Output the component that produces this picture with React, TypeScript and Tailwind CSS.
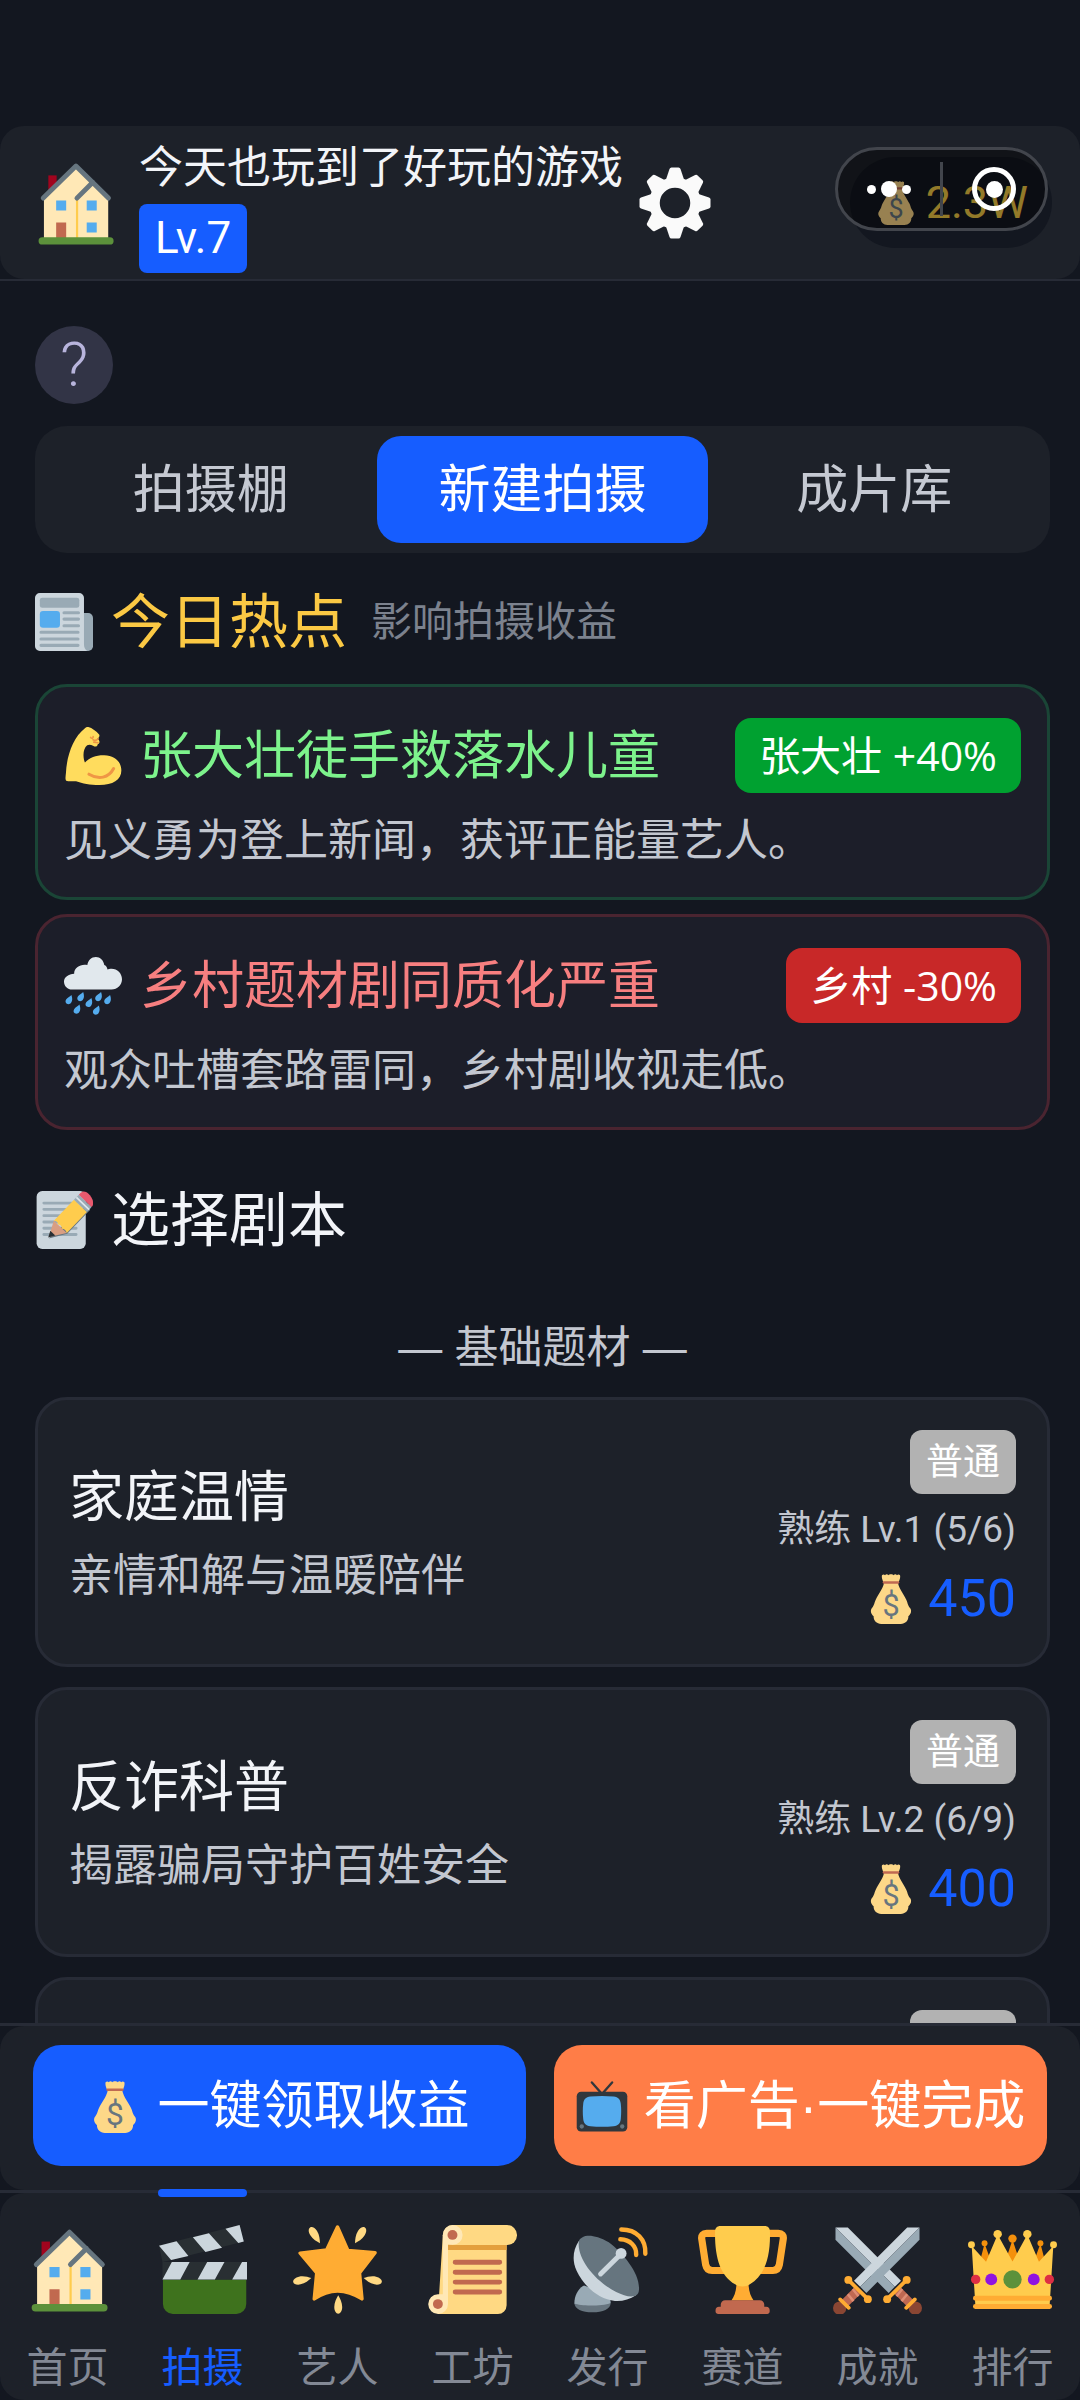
import { useState } from "react";
import type { ReactNode } from "react";

type IconProps = { className?: string };

function Emoji({ className, children }: IconProps & { children: ReactNode }) {
  return (
    <svg viewBox="0 0 36 36" aria-hidden="true" className={`block shrink-0 ${className ?? ""}`}>
      {children}
    </svg>
  );
}

function House({ className }: IconProps) {
  return (
    <Emoji className={className}>
      <path fill="#A0041E" d="M7.500 6.700h3.400v7H7.500z" />
      <path fill="#FFE8B6" d="M18.800 3L5.700 16v16.500h26.300V16z" />
      <path fill="#FFCC4D" d="M18.800 16h.9v16.500h-.9z" />
      <path d="M5.400 16L18.800 2.900 32.100 16M19.200 16l6.500-6.500" fill="none" stroke="#66757F" strokeWidth="2" strokeLinecap="round" strokeLinejoin="round" />
      <path fill="#55ACEE" d="M10.700 17h4.100v4.100h-4.100zM23.200 17h4.100v4.100h-4.100zM23.200 26h4.100v4.100h-4.100z" />
      <path fill="#C1694F" d="M10.700 26h4.100v6.500h-4.100z" />
      <rect x="3.500" y="32" width="30.700" height="3" rx="1.500" fill="#5C913B" />
    </Emoji>
  );
}

function MoneyBag({ className }: IconProps) {
  return (
    <Emoji className={className}>
      <path fill="#FDD888" d="M13 6.500h10c1.200 5 4.200 8 6 12 1.200 2.400.8 3.600 2.700 6 1.600 2 .5 4.500-1.200 6 .2 3-2.200 5.500-5.500 5.500H11c-3.300 0-5.700-2.500-5.500-5.500-1.700-1.500-2.800-4-1.200-6 1.900-2.400 1.500-3.600 2.700-6 1.800-4 4.800-7 6-12z" />
      <path fill="#FDD888" d="M11.500.9c.7-.8 1.700-.7 2.200 0 .6-.9 1.800-.9 2.400 0 .7-1 3.100-1 3.800 0 .6-.9 1.800-.9 2.400 0 .5-.7 1.500-.8 2.200 0 .4 1.600-.3 3.300-1 5.100h-11c-.7-1.800-1.400-3.500-1-5.100z" />
      <rect x="12" y="5.200" width="12" height="1.800" rx=".9" fill="#BF6952" />
      <text x="18" y="30.500" textAnchor="middle" fontSize="22" fontFamily="Roboto, sans-serif" fill="#67757F">$</text>
    </Emoji>
  );
}

function Newspaper({ className }: IconProps) {
  return (
    <Emoji className={className}>
      <rect x="22" y="12.400" width="14" height="23.600" rx="3" fill="#99AAB5" />
      <path fill="#CCD6DD" d="M3 0h24.400a3 3 0 013 3v29c0 1.800.7 3.200 2 4H3a3 3 0 01-3-3V3a3 3 0 013-3z" />
      <rect x="3" y="3" width="24.500" height="6.200" rx="1.500" fill="#99AAB5" />
      <rect x="3" y="11.200" width="12.500" height="10.300" rx="2" fill="#55ACEE" />
      <path d="M18 12.200h9M18 16.200h9M18 20.300h9M3.700 24.400h23M3.700 28.500h23M3.700 32.500h23" stroke="#99AAB5" strokeWidth="1.900" strokeLinecap="round" />
    </Emoji>
  );
}

function FlexedArm({ className }: IconProps) {
  return (
    <Emoji className={className}>
      <path fill="#FFDC5D" d="M15.100 0c2.300.6 5 2.600 6.700 4.700.6.900-.2 1.900-1.200 2.600 1 .5 1.600 1.300 1.400 2.300-.2.900-1.300 1-1.300 1.800 0 1-1.500.9-2.700.2-1.200-.6-2.600-1-3.600-.2-1.600 1.300-2.300 3.600-2.300 6 0 1.800.4 3.500.9 4.700 3.100-3.300 7-4.600 12-4.500 6.500.2 10.600 4 10.600 9.400 0 5.800-5.400 9-13.600 9-6 0-10.500-1-14.500-2.400-1.700 0-5.300.2-6.100-.3C.600 32.600 1 30.500 1.200 28.500 1.700 18 5.500 6.500 13 .700c.8-.6 1.400-.8 2.100-.7z" />
      <path d="M15.500 29.300c6 3.600 12.200 2.400 15.300-3.500" fill="none" stroke="#EF9645" strokeWidth="1.900" strokeLinecap="round" />
      <path d="M16.500 6.400c.7 1.100 1.800.5 1.600-.5M18 7.900c1.300.8 2.300.4 3.200-.6M18.500 9.400l2.600.4" fill="none" stroke="#EF9645" strokeWidth="1" strokeLinecap="round" />
    </Emoji>
  );
}

const DROPS = [[3, 26.500], [10.300, 24.600], [15.400, 28.300], [21.400, 24.600], [27, 26.500], [8, 32.400], [20, 33]];

function RainCloud({ className }: IconProps) {
  return (
    <Emoji className={className}>
      <path fill="#E1E8ED" d="M29.500 7.300c-.8-.1-1.700 0-2.500.4C26.700 6 26 5.200 25 4.900 24.500 2 22.400 0 19.800 0c-2.800 0-5 2.200-5.300 5-3.900-.9-8.300 1.400-8.200 5.400C2.800 10.600 0 12.500 0 15.300 0 18 2.300 20.200 5 20.200h24.500c3.600 0 6.500-2.800 6.500-6.400s-2.900-6.500-6.500-6.500z" />
      {DROPS.map(([x, y]) => (
        <path key={`${x}-${y}`} transform={`translate(${x} ${y})`} fill="#55ACEE" d="M1.600-2.900C2.300-1 2.300.5 1.500 1.800.9 2.800-.4 3.100-1.300 2.500-2.200 1.900-2.300.8-1.600-.2-.9-1.300.500-1.800 1.600-2.900z" />
      ))}
    </Emoji>
  );
}

function Memo({ className }: IconProps) {
  return (
    <Emoji className={className}>
      <rect x="1" y="0" width="30.500" height="36" rx="3.500" fill="#CCD6DD" />
      <path d="M5.500 7.500h20M5.500 11.400h20M5.500 15.300h20M5.500 19.200h20M5.500 23.100h20M5.500 27h20" stroke="#99AAB5" strokeWidth="1.800" strokeLinecap="round" />
      <path fill="#66757F" d="M35.800 5.500L34 12 20 26.500 8.500 29.500z" />
      <path fill="#D99E82" d="M8.500 28.500l3.200-10 8 7.600z" />
      <path fill="#292F33" d="M8.200 28.900l1.300-4.200 3.100 2.900z" />
      <path fill="#FFCC4D" d="M11.700 18.500l12.500-13 8 7.600L19.700 26.100c-.4-1.800-1.300-2.600-3-2.700 0-1.600-.8-2.500-2.400-2.600-.1-1.500-1-2.300-2.600-2.300z" />
      <path fill="#99AAB5" d="M24.200 5.500l3-3.100 7.900 7.600-2.900 3.100z" />
      <path d="M25.700 4l7.900 7.600" stroke="#E1E8ED" strokeWidth="1" />
      <path fill="#EA596E" d="M27.200 2.400l1-1.100c1.300-1.400 3.200-1.300 5 .4s3.700 4.800 2.500 7.600l-.6.700z" />
    </Emoji>
  );
}

function Clapper({ className }: IconProps) {
  return (
    <Emoji className={className}>
      <path fill="#3E721D" d="M2 22h33.700v10a4 4 0 01-4 4H6a4 4 0 01-4-4z" />
      <path fill="#292F33" d="M1.800 15H36v7H1.800zM.4 8.300L33 0l1.700 6.700-30.500 7.800L1.800 15z" />
      <path fill="#CCD6DD" d="M5.600 15h7.200L9 22H1.800zM19.900 15h7L23 22h-7zM34 15h2v7h-6zM.4 8.400l7.100-1.800 4.800 5.900-7 1.700zM14.100 5l6.500-1.700 5.300 5.900-6.700 1.700zM27.300 1.500L33 0l1.700 6.700-2.200.6z" />
    </Emoji>
  );
}

function GlowingStar({ className }: IconProps) {
  const ray = "M0-3.600c.7 1.200 1.600 2.900 1.600 4.800 0 1.600-.7 2.700-1.600 2.700S-1.600 2.800-1.600 1.200c0-1.900.9-3.600 1.600-4.800z";
  return (
    <Emoji className={className}>
      <path fill="#FFAC33" stroke="#FFAC33" strokeWidth="1.400" strokeLinejoin="round" d="M18 .8l4.200 9.500 11 .9-6.300 8.200 1 10.500c-6.500-4.200-13.300-4.200-19.300 0l1-10.500-6.700-8 10.700-1.300z" />
      <g fill="#FFD983">
        <path d={ray} transform="translate(9 4.300) rotate(148)" />
        <path d={ray} transform="translate(27 4.300) rotate(-148)" />
        <path d={ray} transform="translate(3.900 22.200) rotate(78)" />
        <path d={ray} transform="translate(32.100 22.200) rotate(-78)" />
        <path d={ray} transform="translate(18.300 32)" />
      </g>
    </Emoji>
  );
}

function Scroll({ className }: IconProps) {
  return (
    <Emoji className={className}>
      <path fill="#FFD983" d="M6 4h25.800v28.500a3.500 3.500 0 01-3.500 3.500H4z" />
      <path fill="#E39F3D" d="M8 7h23.800v3.100H8z" />
      <rect x="6" y="0" width="30" height="8.100" rx="4" fill="#FFD983" />
      <path fill="#FFE8B6" d="M10 0a4 4 0 110 8H8.100v24A4 4 0 114 28h2V4a4 4 0 014-4z" />
      <circle cx="9.900" cy="4" r="2" fill="#C1694F" />
      <circle cx="4" cy="32" r="2" fill="#C1694F" />
      <path d="M11 15.100h18M11 19.100h18M11 23.100h18M11 27.100h18" stroke="#C1694F" strokeWidth="2" strokeLinecap="round" />
    </Emoji>
  );
}

function Satellite({ className }: IconProps) {
  return (
    <Emoji className={className}>
      <path fill="#67757F" d="M4.600 31.500h14.700c0 2.400-3.200 3.800-7.400 3.800s-7.300-1.400-7.300-3.800z" />
      <path fill="#99AAB5" d="M8.500 24.500c-2.500 1.200-4 4.500-3.900 7.300 2.800 1.100 11 1.100 14.700-.3l-.4-3.500z" />
      <path fill="#CCD6DD" d="M6.400 6.500C4 10 3.600 14.500 5.500 18.500c3 6.300 9 11.600 15.500 12.200 3 .2 6-.6 8.500-2.300z" />
      <path fill="#66757F" d="M6.400 6.500C7.700 3.700 12.300 3.400 18.500 7c6 4.500 13 13 12.200 19.500-.3 3.300-4.700 2.900-9.200.6C13.500 23 5.500 14 6.400 6.500z" />
      <path d="M15.200 19.800l8.300-8.200" stroke="#CCD6DD" strokeWidth="2" strokeLinecap="round" />
      <circle cx="23.500" cy="11.500" r="2.200" fill="#CCD6DD" />
      <path d="M23.200 5.800c4 .2 6.600 2.700 6.400 6.300M23.600 1.800c6.200 0 10 4 9.700 9.800" fill="none" stroke="#FFAC33" strokeWidth="1.800" strokeLinecap="round" />
    </Emoji>
  );
}

function Trophy({ className }: IconProps) {
  return (
    <Emoji className={className}>
      <path d="M9 3.400H3.500C2 3.400 1.300 4.200 1.500 5.600l1.600 10.500c.3 1.500 1.100 2.300 2.600 2.300H12M27 3.400h5.500c1.500 0 2.200.8 2 2.200l-1.600 10.500c-.3 1.500-1.100 2.300-2.600 2.300H24" fill="none" stroke="#FFAC33" strokeWidth="2.900" />
      <path fill="#FFAC33" d="M15.500 22h5c-.3 4 .6 6.500 2 8.500h-9c1.400-2 2.300-4.500 2-8.500z" />
      <path fill="#C1694F" d="M11 30.400h14a1.800 1.800 0 011.800 1.800v.9h.8c.9 0 1.400.6 1.400 1.400v.5c0 .6-.5 1-1 1H8.200c-.6 0-1.100-.4-1.100-1v-.5c0-.8.5-1.400 1.400-1.400h.7v-.9a1.800 1.800 0 011.800-1.800z" />
      <path fill="#FFCC4D" d="M9 .4h18c1.300 0 2.100.9 2.100 2.200C29.400 13 27 20.500 21 24c-1.800 1.200-4.200 1.200-6 0C9 20.500 6.700 13 6.900 2.600 6.900 1.300 7.700.4 9 .4z" />
    </Emoji>
  );
}

function Sword() {
  return (
    <>
      <path fill="#CCD6DD" d="M35 1h-5L8.500 22.500 11 25z" />
      <path fill="#99AAB5" d="M35 1v5L13.500 27.500 11 25z" />
      <path d="M10.600 25.800L4 32.400" stroke="#BF6952" strokeWidth="3.600" />
      <path d="M8 25.900l2.300 2.900M6 28l2.300 2.800" stroke="#DE8E75" strokeWidth="1" />
      <circle cx="2.700" cy="33.600" r="2.700" fill="#8A4633" />
      <path d="M2.900 30.100l3.500 3.400M6.300 22.300l7.800 7.700" stroke="#FFAC33" strokeWidth="1.500" strokeLinecap="round" />
      <circle cx="6.200" cy="22.200" r="1.600" fill="#FFAC33" />
      <circle cx="14.100" cy="30" r="1.600" fill="#FFAC33" />
    </>
  );
}

function CrossedSwords({ className }: IconProps) {
  return (
    <Emoji className={className}>
      <g transform="matrix(-1 0 0 1 36 0)">
        <Sword />
      </g>
      <Sword />
    </Emoji>
  );
}

function Crown({ className }: IconProps) {
  return (
    <Emoji className={className}>
      <g fill="#F4900C">
        <path d="M6.700 7.500L4 18h6.500zM18 6l-4 12h8zM29.300 7.500L25.500 18H32z" />
        <circle cx="6.700" cy="7.400" r="1.200" />
        <circle cx="18" cy="5.500" r="1.700" />
        <circle cx="29.300" cy="7.400" r="1.200" />
      </g>
      <path fill="#FFCC4D" d="M1.500 8.500l5.800 6.400L12 3.800l6 11 6-11 4.700 11.100 5.800-6.400L33 33H3z" />
      <g fill="#FFCC4D">
        <circle cx="1.400" cy="8" r="1.400" />
        <circle cx="12" cy="3.700" r="1.700" />
        <circle cx="24" cy="3.700" r="1.700" />
        <circle cx="34.600" cy="8" r="1.400" />
      </g>
      <path d="M3 29.600h30M3 33h30" stroke="#FFAC33" strokeWidth="2" strokeLinecap="round" />
      <circle cx="18" cy="22" r="3.700" fill="#5C913B" />
      <circle cx="9.400" cy="22" r="2.400" fill="#9013E0" />
      <circle cx="26.600" cy="22" r="2.400" fill="#9013E0" />
      <circle cx="3.100" cy="22" r="1.900" fill="#DD2E44" />
      <circle cx="32.900" cy="22" r="1.900" fill="#DD2E44" />
    </Emoji>
  );
}

function Television({ className }: IconProps) {
  return (
    <Emoji className={className}>
      <path d="M11 1l7 8 7-8" fill="none" stroke="#31373D" strokeWidth="1.600" strokeLinecap="round" />
      <rect x=".5" y="7.500" width="35" height="27.500" rx="3" fill="#31373D" />
      <path fill="#55ACEE" d="M10 10.800c5.300-.5 10.700-.5 16 0 3.400.4 4.700 2.200 5 5 .4 3.700.4 6.800 0 10.500-.3 2.800-1.600 4.600-5 5-5.300.5-10.700.5-16 0-3.400-.4-4.700-2.200-5-5-.4-3.700-.4-6.800 0-10.500.3-2.800 1.600-4.600 5-5z" />
      <circle cx="4" cy="31.500" r="1.500" fill="#66757F" />
      <circle cx="32" cy="31.500" r="1.500" fill="#66757F" />
    </Emoji>
  );
}

const TEETH = [0, 45, 90, 135, 180, 225, 270, 315];

function Gear({ className }: IconProps) {
  return (
    <svg viewBox="-36 -36 72 72" aria-hidden="true" className={className}>
      <circle r="20.500" fill="none" stroke="currentColor" strokeWidth="10.500" />
      {TEETH.map(a => (
        <path key={a} transform={`rotate(${a})`} fill="currentColor" d="M-9.500-22l4-12q.5-1.500 2-1.500h7q1.500 0 2 1.500L9.500-22z" />
      ))}
    </svg>
  );
}

const TABS = ["拍摄棚", "新建拍摄", "成片库"];

const NEWS = [
  { icon: FlexedArm, title: "张大壮徒手救落水儿童", desc: "见义勇为登上新闻，获评正能量艺人。", badge: "张大壮 +40%", border: "border-[#1a4536]", color: "text-[#7df38c]", badgeBg: "bg-[#00a130]" },
  { icon: RainCloud, title: "乡村题材剧同质化严重", desc: "观众吐槽套路雷同，乡村剧收视走低。", badge: "乡村 -30%", border: "border-[#4a2430]", color: "text-[#f77f80]", badgeBg: "bg-[#c82828]" },
];

const SCRIPTS = [
  { title: "家庭温情", desc: "亲情和解与温暖陪伴", rarity: "普通", skill: "熟练 Lv.1 (5/6)", price: 450 },
  { title: "反诈科普", desc: "揭露骗局守护百姓安全", rarity: "普通", skill: "熟练 Lv.2 (6/9)", price: 400 },
];

const NAV = [
  { label: "首页", icon: House },
  { label: "拍摄", icon: Clapper },
  { label: "艺人", icon: GlowingStar },
  { label: "工坊", icon: Scroll },
  { label: "发行", icon: Satellite },
  { label: "赛道", icon: Trophy },
  { label: "成就", icon: CrossedSwords },
  { label: "排行", icon: Crown },
];

export default function App() {
  const [tab, setTab] = useState("新建拍摄");
  const [page, setPage] = useState("拍摄");

  return (
    <div lang="zh-CN" className="flex h-screen flex-col overflow-hidden bg-[#131720] pt-[126px] font-[Roboto,'Noto_Sans_CJK_SC',sans-serif] text-[#f2f4f8]">
      {/* Header */}
      <header className="relative shrink-0 border-b-2 border-[#272b36]">
        <div className="flex h-[153px] items-center rounded-3xl bg-[#1d2129] pr-7 pl-[30px]">
          <House className="size-[88px]" />
          <div className="ml-[21px] flex flex-col items-start gap-1 pt-1">
            <span className="text-[44px] leading-[64px] whitespace-nowrap">今天也玩到了好玩的游戏</span>
            <span className="rounded-lg bg-[#165dff] px-4 text-[44px] leading-[69px] text-white">Lv.7</span>
          </div>
          <button aria-label="设置" className="ml-4 text-[#fafafa]">
            <Gear className="size-[72px]" />
          </button>
          <div className="ml-auto flex h-[91px] items-center gap-2 rounded-full bg-[#131720] px-6">
            <MoneyBag className="size-11" />
            <span className="text-[45px] leading-[60px] text-[#f5cb45]">2.3W</span>
          </div>
        </div>
        {/* Mini-program capsule floats over the balance */}
        <div className="absolute top-[21px] right-8 flex h-[84px] w-[213px] items-center rounded-full border-[3px] border-[#42454c] bg-black/40">
          <button aria-label="更多" className="flex h-full flex-1 items-center justify-center gap-[5px]">
            <span className="size-[9px] rounded-full bg-white" />
            <span className="size-4 rounded-full bg-white" />
            <span className="size-[9px] rounded-full bg-white" />
          </button>
          <span className="h-[54px] w-[3px] bg-[#42454c]" />
          <button aria-label="关闭" className="flex h-full flex-1 items-center justify-center">
            <span className="flex size-11 items-center justify-center rounded-full border-[5px] border-white">
              <span className="size-[17px] rounded-full bg-white" />
            </span>
          </button>
        </div>
      </header>

      <main className="min-h-0 flex-1 overflow-hidden pt-[45px] pr-[30px] pl-[35px]">
        <button className="flex size-[78px] items-center justify-center rounded-full bg-[#323446] text-[62px] leading-[60px] font-light text-[#b8b4dc]">?</button>

        {/* Tabs */}
        <div className="mt-[22px] flex rounded-[32px] bg-[#1d2129] p-[10px]">
          {TABS.map(t => (
            <button key={t} onClick={() => setTab(t)}
              className={`flex-1 rounded-3xl pt-[2px] text-[52px] leading-[105px] ${tab === t ? "bg-[#165dff] text-white" : "text-[#c5c9d2]"}`}>
              {t}
            </button>
          ))}
        </div>

        {/* Today's news */}
        <div className="mt-[29px] flex items-center">
          <Newspaper className="size-[58px]" />
          <h2 className="ml-[18px] pt-[2px] text-[59px] leading-[78px] text-[#fbc944]">今日热点</h2>
          <span className="ml-6 text-[41px] leading-[60px] text-[#7c828e]">影响拍摄收益</span>
        </div>
        <div className="mt-[22px] flex flex-col gap-[14px]">
          {NEWS.map(n => (
            <article key={n.title} className={`rounded-[32px] border-[3px] bg-[#1c1e29] px-[26px] pt-[31px] pb-[26px] ${n.border}`}>
              <div className="flex items-center">
                <n.icon className="size-[58px]" />
                <h3 className={`ml-[18px] pt-[2px] text-[52px] leading-[73px] ${n.color}`}>{n.title}</h3>
                <span className={`ml-auto rounded-2xl px-6 font-['Open_Sans','Noto_Sans_CJK_SC',sans-serif] text-[41px] leading-[75px] text-white ${n.badgeBg}`}>{n.badge}</span>
              </div>
              <p className="mt-[18px] text-[44px] leading-[60px] text-[#c3c7d0]">{n.desc}</p>
            </article>
          ))}
        </div>

        {/* Script picker */}
        <div className="mt-[50px] flex items-center">
          <Memo className="size-[58px]" />
          <h2 className="ml-[18px] pt-[2px] text-[59px] leading-[78px]">选择剧本</h2>
        </div>
        <p className="mt-14 text-center font-['Liberation_Sans','Noto_Sans_CJK_SC',sans-serif] text-[44px] leading-[64px] text-[#c3c7d0]">— 基础题材 —</p>
        <div className="mt-[17px] flex flex-col gap-5">
          {SCRIPTS.map(s => (
            <article key={s.title} className="flex items-center justify-between rounded-[32px] border-[3px] border-[#272b36] bg-[#1d2129] px-[31px] py-[30px]">
              <div>
                <h3 className="text-[55px] leading-[80px]">{s.title}</h3>
                <p className="mt-2 text-[44px] leading-[62px] text-[#c3c7d0]">{s.desc}</p>
              </div>
              <div className="flex flex-col items-end">
                <span className="rounded-xl bg-[#b2b2b2] px-4 pt-[2px] text-[37px] leading-[62px] text-white">{s.rarity}</span>
                <span className="mt-[10px] text-[37px] leading-[52px] text-[#c3c7d0]">{s.skill}</span>
                <span className="mt-2 flex items-center gap-3 text-[52px] leading-[70px] text-[#165dff]">
                  <MoneyBag className="size-[50px]" />
                  {s.price}
                </span>
              </div>
            </article>
          ))}
          <div className="flex justify-end rounded-[32px] border-[3px] border-[#272b36] bg-[#1d2129] px-[31px] py-[30px]">
            <span className="h-[204px] w-[106px] rounded-xl bg-[#b2b2b2]" />
          </div>
        </div>
      </main>

      {/* Quick actions */}
      <div className="shrink-0 border-t-[3px] border-[#272b36]">
        <div className="flex gap-7 rounded-3xl bg-[#1d2129] px-[33px] pt-[19px] pb-6">
          <button className="flex flex-1 items-center justify-center gap-4 rounded-[28px] bg-[#165dff] pt-[2px] text-[52px] leading-[119px] whitespace-nowrap text-white">
            <MoneyBag className="size-[52px]" />
            一键领取收益
          </button>
          <button className="flex flex-1 items-center justify-center gap-4 rounded-[28px] bg-[#ff7d47] pt-[2px] text-[52px] leading-[119px] whitespace-nowrap text-white">
            <Television className="size-[52px]" />
            <span className="font-['Liberation_Sans','Noto_Sans_CJK_SC',sans-serif]">看广告·一键完成</span>
          </button>
        </div>
      </div>

      {/* Bottom nav */}
      <nav className="shrink-0 border-t-[3px] border-[#272b36]">
        <div className="flex rounded-3xl bg-[#1d2129]">
          {NAV.map(item => (
            <button key={item.label} onClick={() => setPage(item.label)}
              className={`relative flex flex-1 flex-col items-center pt-8 pb-[2px] text-[41px] leading-[60px] ${page === item.label ? "text-[#165dff]" : "text-[#838995]"}`}>
              {page === item.label && <span className="absolute -top-1 h-2 w-[89px] rounded-full bg-[#165dff]" />}
              <item.icon className="size-[89px]" />
              <span className="mt-6">{item.label}</span>
            </button>
          ))}
        </div>
      </nav>
    </div>
  );
}
